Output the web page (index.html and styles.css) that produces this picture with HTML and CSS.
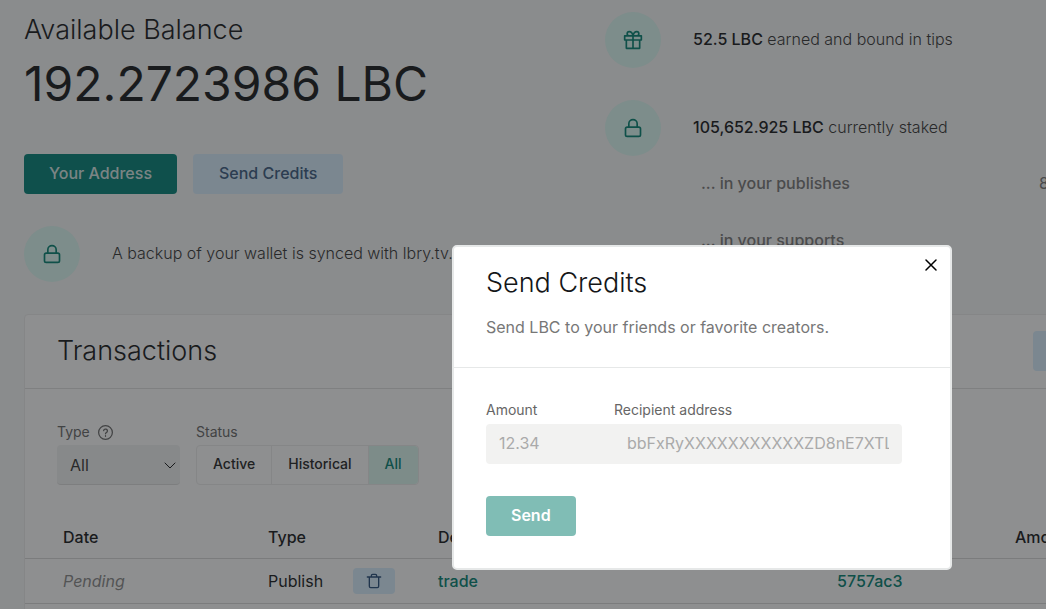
FILE: index.html
```
<!DOCTYPE html>
<html lang="en">
<head>
    <meta charset="UTF-8">
    <title>Wallet</title>
    <link rel="stylesheet" href="styles.css">
</head>
<body>
    <div class="page">
        <main class="wallet">
            <div class="columns">
                <section class="balance">
                    <h2 class="title">Available Balance</h2>
                    <p class="amount">192.2723986 LBC</p>
                    <div class="actions">
                        <button type="button" class="button button-primary">Your Address</button>
                        <button type="button" class="button button-secondary">Send Credits</button>
                    </div>
                    <div class="info-row">
                        <span class="badge">
                            <svg viewBox="0 0 24 24"><rect x="3" y="11" width="18" height="11" rx="2"/><path d="M7 11V7a5 5 0 0 1 10 0v4"/></svg>
                        </span>
                        <p>A backup of your wallet is synced with lbry.tv.</p>
                    </div>
                </section>

                <section class="stakes">
                    <div class="info-row">
                        <span class="badge">
                            <svg viewBox="0 0 24 24"><path d="M20 12v10H4V12M2 7h20v5H2zM12 22V7M12 7H7.500a2.500 2.500 0 0 1 0-5C11 2 12 7 12 7zM12 7h4.500a2.500 2.500 0 0 0 0-5C13 2 12 7 12 7z"/></svg>
                        </span>
                        <p><strong>52.5 LBC</strong> earned and bound in tips</p>
                    </div>
                    <div class="info-row">
                        <span class="badge">
                            <svg viewBox="0 0 24 24"><rect x="3" y="11" width="18" height="11" rx="2"/><path d="M7 11V7a5 5 0 0 1 10 0v4"/></svg>
                        </span>
                        <p><strong>105,652.925 LBC</strong> currently staked</p>
                    </div>
                    <dl class="stake-list">
                        <div><dt>... in your publishes</dt><dd>8</dd></div>
                        <div><dt>... in your supports</dt><dd></dd></div>
                    </dl>
                </section>
            </div>

            <section class="card">
                <header class="card-header">
                    <h2 class="title">Transactions</h2>
                    <button type="button" class="button button-secondary export" aria-label="Export"></button>
                </header>
                <div class="filters">
                    <div class="filter">
                        <label for="type">Type
                            <svg class="help" viewBox="0 0 24 24"><circle cx="12" cy="12" r="11"/><path d="M9 9a3 3 0 0 1 6 1c0 2-3 2-3 4M12 17v1"/></svg>
                        </label>
                        <div class="select">
                            <select id="type"><option>All</option></select>
                            <svg viewBox="0 0 12 8"><path d="M1 1l5 5 5-5"/></svg>
                        </div>
                    </div>
                    <div class="filter">
                        <span class="filter-label">Status</span>
                        <div class="toggle">
                            <button type="button">Active</button>
                            <button type="button">Historical</button>
                            <button type="button" class="active">All</button>
                        </div>
                    </div>
                </div>
                <table class="transactions">
                    <thead>
                        <tr>
                            <th class="col-date">Date</th>
                            <th class="col-type">Type</th>
                            <th class="col-details">Details</th>
                            <th class="col-tx"></th>
                            <th>Amount</th>
                        </tr>
                    </thead>
                    <tbody>
                        <tr>
                            <td class="pending">Pending</td>
                            <td>
                                <div class="type-cell">
                                    Publish
                                    <button type="button" class="delete" aria-label="Delete">
                                        <svg viewBox="0 0 24 24"><path d="M2 6h20M5 6v14a2 2 0 0 0 2 2h10a2 2 0 0 0 2-2V6M8 6V4a2 2 0 0 1 2-2h4a2 2 0 0 1 2 2v2"/></svg>
                                    </button>
                                </div>
                            </td>
                            <td><a href="#">trade</a></td>
                            <td><a href="#">5757ac3</a></td>
                            <td></td>
                        </tr>
                        <tr><td colspan="5"></td></tr>
                    </tbody>
                </table>
            </section>
        </main>

        <div class="overlay">
            <div class="modal" role="dialog" aria-labelledby="modal-title">
                <button type="button" class="close" aria-label="Close">
                    <svg viewBox="0 0 12 12"><path d="M1 1l10 10M11 1L1 11"/></svg>
                </button>
                <header class="modal-header">
                    <h2 class="title" id="modal-title">Send Credits</h2>
                    <p>Send LBC to your friends or favorite creators.</p>
                </header>
                <form class="send-form">
                    <div class="fields">
                        <div class="field">
                            <label for="amount">Amount</label>
                            <input type="text" id="amount" placeholder="12.34">
                        </div>
                        <div class="field field-address">
                            <label for="address">Recipient address</label>
                            <input type="text" id="address" placeholder="bbFxRyXXXXXXXXXXXZD8nE7XTLUx">
                        </div>
                    </div>
                    <button type="button" class="button button-send">Send</button>
                </form>
            </div>
        </div>
    </div>
</body>
</html>
```
FILE: styles.css
```
* {
    box-sizing: border-box;
}
html {
    overflow: hidden;
}
body {
    margin: 0;
    font-family: Inter, "Liberation Sans", sans-serif;
    font-size: 16px;
    line-height: 24px;
    color: #141618;
}
h2, p, dl, dd {
    margin: 0;
}
svg {
    fill: none;
    stroke: currentColor;
    stroke-width: 2;
    stroke-linecap: round;
    stroke-linejoin: round;
}
button, input, select {
    font: inherit;
    border: none;
}
.page {
    position: relative;
    min-width: 1404px;
    min-height: 815px;
    background-color: #f7f8f8;
}
.wallet {
    padding: 12px 24px;
}
.title {
    font-size: 27px;
    font-weight: 300;
    line-height: 36px;
}
.columns {
    display: grid;
    grid-template-columns: 565px 1fr;
    gap: 16px;
}
.amount {
    font-size: 48px;
    line-height: 72px;
}
.actions {
    display: flex;
    gap: 16px;
    margin: 34px 0 32px;
}
.button {
    height: 40px;
    padding: 0 25px 2px;
    border-radius: 4px;
    font-weight: 500;
}
.button-primary {
    background-color: #008076;
    color: #d8e8e6;
}
.button-secondary {
    padding: 0 26px 2px;
    background-color: #d8eeff;
    color: #3a5a80;
}
.info-row {
    display: flex;
    align-items: center;
    gap: 32px;
}
.info-row p {
    padding-bottom: 2px;
    font-weight: 300;
    color: #333;
}
.badge {
    display: flex;
    align-items: center;
    justify-content: center;
    width: 56px;
    height: 56px;
    border-radius: 50%;
    background-color: #dcfaf4;
    color: #008070;
}
.badge svg {
    width: 20px;
    height: 20px;
}
strong {
    font-weight: 500;
    color: #141618;
}
.stakes .info-row {
    margin-bottom: 32px;
}
.stake-list {
    display: flex;
    flex-direction: column;
    gap: 33px;
    padding-left: 96px;
    margin-top: -17px;
    font-weight: 500;
    color: #777;
}
.stake-list div {
    display: grid;
    grid-template-columns: 338px 1fr;
}
.stake-list dd {
    font-weight: 400;
}
.card {
    margin-top: 32px;
    border: 1px solid #ececec;
    border-radius: 4px;
    background-color: #fff;
}
.card-header {
    display: flex;
    justify-content: space-between;
    height: 74px;
    padding: 16px 32px;
    border-bottom: 1px solid #e0e0e0;
}
.card-header .title {
    line-height: 40px;
}
.export {
    width: 314px;
}
.filters {
    display: flex;
    gap: 16px;
    padding: 32px 32px 31px;
}
.filter label, .filter-label {
    display: flex;
    align-items: center;
    gap: 8px;
    height: 24px;
    padding-bottom: 2px;
    font-size: 14px;
    color: #666;
}
.help {
    width: 15px;
    height: 15px;
}
.select {
    position: relative;
    width: 123px;
}
.select select {
    width: 100%;
    height: 40px;
    padding: 0 13px;
    border-bottom: 1px solid #ddd;
    border-radius: 4px;
    background-color: #f1f2f2;
    color: #333;
    appearance: none;
}
.select svg {
    position: absolute;
    right: 4px;
    top: 17px;
    width: 12px;
    height: 8px;
    stroke-width: 1;
}
.toggle {
    display: flex;
    height: 40px;
    border: 1px solid #ececec;
    border-radius: 4px;
}
.toggle button {
    padding: 0 16px 2px;
    border-right: 1px solid #ececec;
    background: none;
    font-size: 14px;
    font-weight: 500;
    color: #222;
}
.toggle .active {
    border: none;
    border-radius: 0 4px 4px 0;
    background-color: #dcf8f0;
    color: #008070;
}
.transactions {
    width: 100%;
    table-layout: fixed;
    border-collapse: collapse;
}
.transactions th {
    height: 42px;
    padding: 0;
    text-align: left;
    font-weight: 500;
}
.transactions td {
    height: 45px;
    padding: 0;
    border-top: 1px solid #d8d8d8;
}
.transactions th:first-child, .transactions td:first-child {
    padding-left: 38px;
}
.col-date {
    width: 243px;
}
.col-type {
    width: 170px;
}
.col-details {
    width: 399px;
}
.col-tx {
    width: 178px;
}
.transactions .pending {
    font-style: italic;
    color: #888;
}
.transactions a {
    color: #008070;
    font-weight: 500;
    text-decoration: none;
}
.type-cell {
    display: flex;
    align-items: center;
    gap: 30px;
}
.delete {
    display: flex;
    align-items: center;
    justify-content: center;
    width: 42px;
    height: 26px;
    padding: 0;
    border-radius: 4px;
    background-color: #d8eeff;
    color: #234a78;
}
.delete svg {
    width: 16px;
    height: 16px;
}
.overlay {
    position: absolute;
    inset: 0;
    display: flex;
    align-items: center;
    justify-content: center;
    background-color: rgba(30, 32, 34, 0.5);
}
.modal {
    position: relative;
    width: 500px;
    border: 2px solid #e6e8e8;
    border-radius: 5px;
    background-color: #fff;
}
.close {
    position: absolute;
    top: 7px;
    right: 8px;
    display: flex;
    align-items: center;
    justify-content: center;
    width: 22px;
    height: 22px;
    padding: 0;
    background: none;
    color: #000;
}
.close svg {
    width: 12px;
    height: 12px;
    stroke-width: 1.5;
}
.modal-header {
    padding: 18px 32px 28px;
    border-bottom: 1px solid #e6e8e8;
}
.modal-header p {
    margin-top: 14px;
    color: #777;
}
.send-form {
    padding: 30px 48px 32px 32px;
}
.fields {
    display: flex;
    margin-bottom: 32px;
}
.field {
    width: 128px;
}
.field-address {
    flex: 1;
}
.field label {
    display: block;
    height: 26px;
    font-size: 14px;
    color: #666;
}
.field input {
    width: 100%;
    height: 40px;
    padding: 0 13px 2px;
    border-radius: 4px 0 0 4px;
    background-color: #f2f2f1;
}
.field-address input {
    border-radius: 0 4px 4px 0;
}
.field input::placeholder {
    color: #aaa;
}
.button-send {
    background-color: #80bdb5;
    color: #fff;
    font-weight: 600;
}
```
